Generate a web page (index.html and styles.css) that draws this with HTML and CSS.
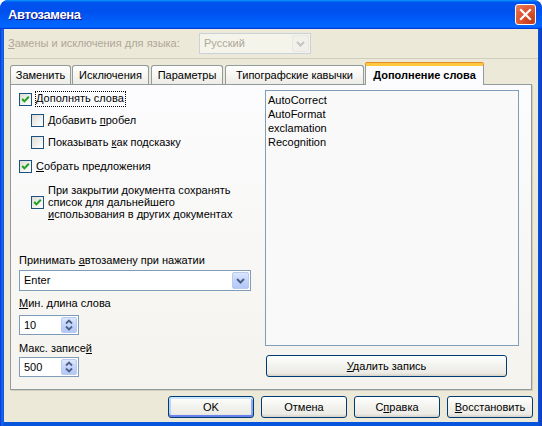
FILE: index.html
```html
<!DOCTYPE html>
<html lang="ru">
<head>
<meta charset="utf-8">
<title>Автозамена</title>
<link rel="stylesheet" href="styles.css">
</head>
<body>
<div class="window">
  <div class="titlebar">
    <span class="title">Автозамена</span>
    <span class="close"><svg width="19" height="19" viewBox="0 0 19 19"><path d="M5 5 L14 14 M14 5 L5 14" stroke="#fff" stroke-width="2.2" stroke-linecap="square"/></svg></span>
  </div>
  <div class="client">
    <div class="langrow">
      <span class="lang-label"><u>З</u>амены и исключения для языка:</span>
      <div class="combo combo-disabled">
        <span class="combo-text">Русский</span>
        <span class="dd dd-disabled"><svg width="9" height="6" viewBox="0 0 9 6"><path d="M1 1 L4.5 4.5 L8 1" fill="none" stroke="#C5C5C0" stroke-width="2"/></svg></span>
      </div>
    </div>
    <div class="sep"></div>
    <div class="tabs">
      <div class="tab tab-1">Заменить</div>
      <div class="tab tab-2">Исключения</div>
      <div class="tab tab-3">Параметры</div>
      <div class="tab tab-4">Типографские кавычки</div>
      <div class="tab tab-active">Дополнение слова</div>
    </div>
    <div class="panel">
      <div class="left">
        <div class="row row-1">
          <span class="cb"><svg width="11" height="11" viewBox="0 0 11 11"><path d="M2.2 5 L4.4 7.4 L8.8 2.8" fill="none" stroke="#21A121" stroke-width="2"/></svg></span>
          <span class="label focus"><u>Д</u>ополнять слова</span>
        </div>
        <div class="row row-2 indent">
          <span class="cb"></span>
          <span class="label">Добавить <u>п</u>робел</span>
        </div>
        <div class="row row-3 indent">
          <span class="cb"></span>
          <span class="label">Показывать <u>к</u>ак подсказку</span>
        </div>
        <div class="row row-4">
          <span class="cb"><svg width="11" height="11" viewBox="0 0 11 11"><path d="M2.2 5 L4.4 7.4 L8.8 2.8" fill="none" stroke="#21A121" stroke-width="2"/></svg></span>
          <span class="label"><u>С</u>обрать предложения</span>
        </div>
        <div class="row row-5 indent">
          <span class="cb"><svg width="11" height="11" viewBox="0 0 11 11"><path d="M2.2 5 L4.4 7.4 L8.8 2.8" fill="none" stroke="#21A121" stroke-width="2"/></svg></span>
          <span class="label multi">При закрытии документа сохранять<br>список для дальнейшего<br><u>и</u>спользования в других документах</span>
        </div>
        <div class="caption cap-accept"><span>Принимать <u>а</u>втозамену при нажатии</span></div>
        <div class="combo combo-enter">
          <span class="combo-text">Enter</span>
          <span class="dd"><svg width="9" height="6" viewBox="0 0 9 6"><path d="M1 1 L4.5 4.5 L8 1" fill="none" stroke="#4D6185" stroke-width="2"/></svg></span>
        </div>
        <div class="caption cap-min"><span><u>М</u>ин. длина слова</span></div>
        <div class="spin">
          <span class="spin-text">10</span>
          <span class="spin-btns">
            <svg width="16" height="16" viewBox="0 0 16 16"><path d="M5 6.5 L8 3.5 L11 6.5" fill="none" stroke="#4D6185" stroke-width="1.8"/><path d="M5 9.5 L8 12.5 L11 9.5" fill="none" stroke="#4D6185" stroke-width="1.8"/></svg>
          </span>
        </div>
        <div class="caption cap-max"><span>Макс. записе<u>й</u></span></div>
        <div class="spin spin-last">
          <span class="spin-text">500</span>
          <span class="spin-btns">
            <svg width="16" height="16" viewBox="0 0 16 16"><path d="M5 6.5 L8 3.5 L11 6.5" fill="none" stroke="#4D6185" stroke-width="1.8"/><path d="M5 9.5 L8 12.5 L11 9.5" fill="none" stroke="#4D6185" stroke-width="1.8"/></svg>
          </span>
        </div>
      </div>
      <div class="right">
        <div class="listbox">
          <div class="item">AutoCorrect</div>
          <div class="item">AutoFormat</div>
          <div class="item">exclamation</div>
          <div class="item">Recognition</div>
        </div>
        <div class="btn btn-delete"><span><u>У</u>далить запись</span></div>
      </div>
    </div>
    <div class="buttons">
      <div class="btn btn-default">OK</div>
      <div class="btn">Отмена</div>
      <div class="btn"><span>С<u>п</u>равка</span></div>
      <div class="btn"><span><u>В</u>осстановить</span></div>
    </div>
  </div>
</div>
</body>
</html>
```

FILE: styles.css
```css
* { box-sizing: border-box; }

html, body {
  margin: 0;
  padding: 0;
  background: #ffffff;
}

body {
  font-family: "Liberation Sans", Arial, sans-serif;
  font-size: 11px;
  line-height: 13px;
  color: #000;
}

u { text-decoration: underline; text-underline-offset: 1px; }

.window {
  width: 542px;
  height: 426px;
  background: linear-gradient(90deg, #0831D9 0, #166AEE 2px, #0855DD 4px, #0855DD 538px, #0D3FC4 541px);
  border-radius: 8px 8px 0 0;
  display: flex;
  flex-direction: column;
  overflow: hidden;
}

.titlebar {
  height: 29px;
  flex: none;
  display: flex;
  align-items: center;
  justify-content: space-between;
  padding: 0 6px 1px 8px;
  background: linear-gradient(180deg, #0997FF 0, #0053EE 8%, #0050EE 40%, #0066FF 88%, #0066FF 93%, #005BFF 95%, #003DD7 96%, #003DD7 100%);
  border-radius: 8px 8px 0 0;
}

.title {
  color: #fff;
  font-weight: bold;
  font-size: 13px;
  letter-spacing: -0.4px;
  text-shadow: 1px 1px #0F1089;
}

.close {
  width: 21px;
  height: 21px;
  border: 1px solid #fff;
  border-radius: 3px;
  background: radial-gradient(circle at 80% 85%, #C23A1B 0, #D44A26 30%, #E0603A 65%, #EA8360 100%);
  display: flex;
  align-items: center;
  justify-content: center;
  margin-top: 1px;
}

.client {
  flex: 1;
  margin: 0 4px 4px 4px;
  background: #ECE9D8;
  display: flex;
  flex-direction: column;
}

.langrow {
  margin-top: 4px;
  height: 21px;
  display: flex;
  align-items: center;
  padding-left: 4px;
}

.lang-label {
  width: 191px;
  color: #ACA899;
}

.combo {
  height: 21px;
  border: 1px solid #7F9DB9;
  background: #fff;
  display: flex;
  align-items: center;
  justify-content: space-between;
  padding: 1px;
}

.combo-text { padding-left: 3px; }

.combo-disabled {
  width: 112px;
  border-color: #C9D2DC;
  background: #F5F4EA;
  color: #ACA899;
}

.dd {
  width: 17px;
  height: 17px;
  border: 1px solid #B9CAEF;
  border-radius: 2px;
  background: linear-gradient(180deg, #DDE7FD 0, #C3D3FD 50%, #B4C8F6 100%);
  display: flex;
  align-items: center;
  justify-content: center;
}

.dd-disabled {
  border-color: #E8E8E2;
  background: #F1F0EA;
}

.sep {
  margin-top: 4px;
  height: 1px;
  background: #D0CDBE;
}

.tabs {
  margin-top: 4px;
  margin-left: 6px;
  height: 21px;
  display: flex;
  align-items: flex-end;
}

.tab {
  height: 19px;
  border: 1px solid #919B9C;
  border-bottom: none;
  border-radius: 3px 3px 0 0;
  background: linear-gradient(180deg, #FFFFFF 0, #F8F8F5 40%, #EDECE6 100%);
  display: flex;
  align-items: center;
  justify-content: center;
  padding-top: 1px;
  white-space: nowrap;
}

.tab-1 { width: 61px; margin-right: 1px; }
.tab-2 { width: 77px; margin-right: 2px; }
.tab-3 { width: 72px; margin-right: 2px; }
.tab-4 { width: 139px; margin-right: 1px; }

.tab-active {
  width: 119px;
  height: 22px;
  margin-bottom: -1px;
  position: relative;
  z-index: 2;
  background: #FCFCFE;
  border-top: 3px solid #FFC73C;
  box-shadow: 0 -1px 0 #E68B2C;
  border-radius: 2px 2px 0 0;
  font-weight: bold;
  padding-top: 0;
}

.panel {
  margin-left: 6px;
  width: 522px;
  height: 306px;
  flex: none;
  border: 1px solid #919B9C;
  background: linear-gradient(180deg, #FCFCFE 0, #F4F3EE 100%);
  box-shadow: 1px 1px 0 #D0CEBF;
  display: grid;
  grid-template-columns: 232px 1fr;
  column-gap: 14px;
  padding: 5px 12px 0 8px;
}

.left {
  display: flex;
  flex-direction: column;
}

.row {
  display: flex;
  align-items: center;
  height: 18px;
}

.indent { padding-left: 12px; }

.row-2 { margin-top: 3px; }
.row-3 { margin-top: 4px; }
.row-4 { margin-top: 6px; }
.row-5 { margin-top: 9px; height: 36px; }

.cb {
  width: 13px;
  height: 13px;
  flex: none;
  border: 1px solid #1C5180;
  background: linear-gradient(135deg, #DCDCD7 0, #F2F2EF 60%, #FFFFFF 100%);
  display: flex;
  align-items: center;
  justify-content: center;
  margin-right: 4px;
}

.label { white-space: nowrap; }

.focus {
  border: 1px dotted #000;
  padding: 0 1px 1px 0;
  margin-left: -1px;
}

.multi { line-height: 12px; }

.caption {
  height: 18px;
  display: flex;
  align-items: center;
  white-space: nowrap;
}

.cap-accept { margin-top: 31px; }

.combo-enter {
  width: 232px;
  margin-top: 1px;
}

.cap-min { margin-top: 3px; }

.spin {
  width: 60px;
  height: 20px;
  margin-top: 3px;
  border: 1px solid #7F9DB9;
  background: #fff;
  display: flex;
  align-items: center;
  justify-content: space-between;
  padding: 1px 1px 1px 0;
}

.spin-text { padding-left: 4px; }

.spin-btns {
  width: 16px;
  height: 16px;
  border: 1px solid #B9CAEF;
  border-radius: 2px;
  background: linear-gradient(180deg, #DDE7FD 0, #C3D3FD 50%, #B4C8F6 100%);
  display: flex;
}

.spin-btns svg { margin: -1px; }

.cap-max { margin-top: 4px; }

.spin-last { margin-top: 0; }

.right {
  display: flex;
  flex-direction: column;
}

.listbox {
  width: 254px;
  height: 256px;
  border: 1px solid #7F9DB9;
  background: #F9F9F9;
  padding: 2px 0 0 2px;
}

.item {
  height: 14px;
  line-height: 14px;
}

.btn {
  height: 22px;
  border: 1px solid #003C74;
  border-radius: 3px;
  background: linear-gradient(180deg, #FFFFFF 0, #F4F4F0 40%, #ECEBE6 85%, #D6D0C5 100%);
  display: flex;
  align-items: center;
  justify-content: center;
  white-space: nowrap;
}

.btn-delete {
  width: 241px;
  margin-top: 9px;
  margin-left: 1px;
}

.buttons {
  margin-top: 6px;
  display: flex;
  justify-content: flex-end;
  gap: 7px;
  padding-right: 5px;
}

.buttons .btn { width: 86px; }

.btn-default {
  box-shadow: inset 0 2px 0 #CEE7FF, inset 0 -2px 0 #6982EE, inset 2px 0 0 #B8D2F8, inset -2px 0 0 #8DA9F0;
}
```
